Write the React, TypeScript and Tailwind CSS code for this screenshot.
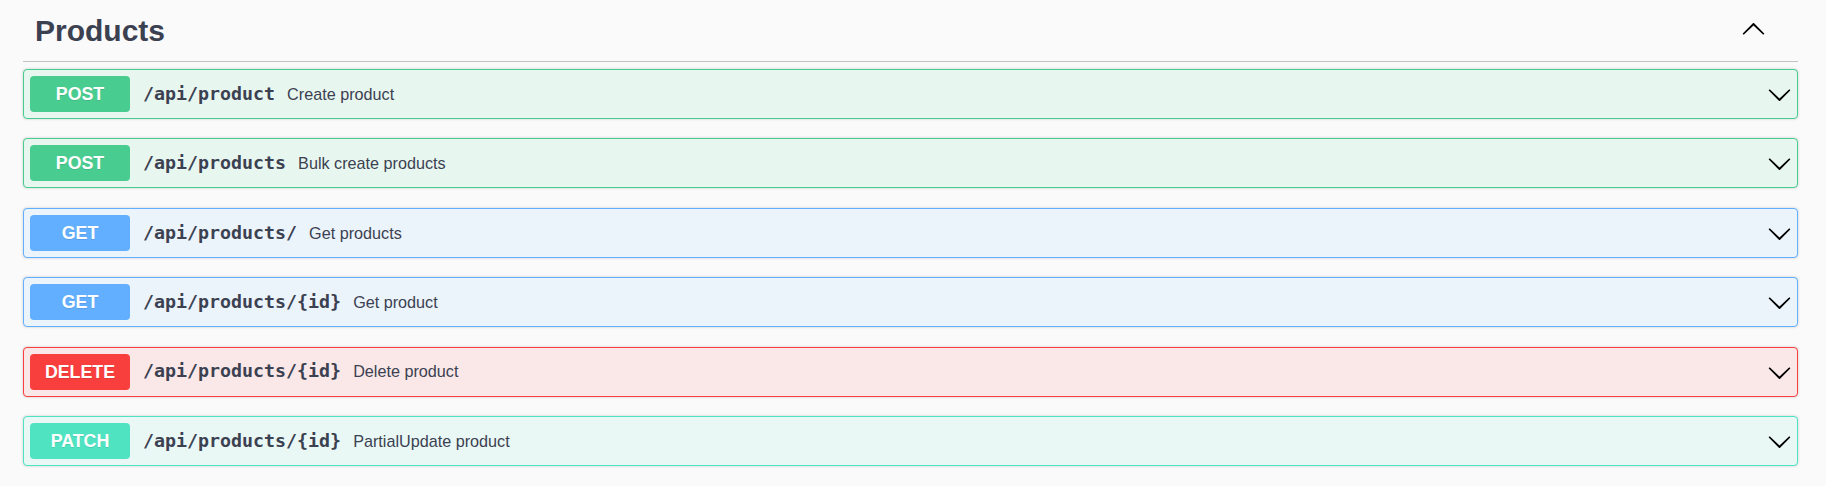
import React from "react";

type Op = {
  method: string;
  path: string;
  desc: string;
  badge: string;
  row: string;
};

const ops: Op[] = [
  { method: "POST", path: "/api/product", desc: "Create product", badge: "bg-[#49cc90]", row: "bg-[#e8f6f0] border-[#49cc90]" },
  { method: "POST", path: "/api/products", desc: "Bulk create products", badge: "bg-[#49cc90]", row: "bg-[#e8f6f0] border-[#49cc90]" },
  { method: "GET", path: "/api/products/", desc: "Get products", badge: "bg-[#61affe]", row: "bg-[#ebf3fb] border-[#61affe]" },
  { method: "GET", path: "/api/products/{id}", desc: "Get product", badge: "bg-[#61affe]", row: "bg-[#ebf3fb] border-[#61affe]" },
  { method: "DELETE", path: "/api/products/{id}", desc: "Delete product", badge: "bg-[#f93e3e]", row: "bg-[#fae7e7] border-[#f93e3e]" },
  { method: "PATCH", path: "/api/products/{id}", desc: "PartialUpdate product", badge: "bg-[#50e3c2]", row: "bg-[#e9f8f5] border-[#50e3c2]" },
];

const ARROW =
  "M17.418 6.109c.272-.268.709-.268.979 0s.271.701 0 .969l-7.908 7.83c-.27.268-.707.268-.979 0l-7.908-7.83c-.27-.268-.27-.701 0-.969.271-.268.709-.268.979 0L10 13.25l7.418-7.141z";

function Chevron({ up = false, className = "" }: { up?: boolean; className?: string }) {
  return (
    <svg
      width="25"
      height="25"
      viewBox="0 0 20 20"
      className={className}
      style={up ? { transform: "rotate(180deg)" } : undefined}
    >
      <path d={ARROW} fill="#000" />
    </svg>
  );
}

export default function App() {
  return (
    <div
      className="w-full h-[486px] bg-[#fafafa] pl-[23px] pr-[28px] text-[#3b4151]"
      style={{ fontFamily: "'Liberation Sans', Arial, sans-serif" }}
    >
      <div className="h-[62px] flex items-center justify-between border-b border-[rgba(59,65,81,0.3)]">
        <h3 className="pl-[12px] text-[30px] leading-none font-bold text-[#3b4151] font-['Liberation_Sans',Arial,sans-serif]">
          Products
        </h3>
        <Chevron up className="mr-[32px] mb-[3px]" />
      </div>
      <div className="mt-[7px] flex flex-col gap-[19.4px]">
        {ops.map((op, i) => (
          <div
            key={i}
            className={`h-[50px] flex items-center border rounded-[4px] pl-[6px] pr-[5px] shadow-[0_0_3px_rgba(0,0,0,0.19)] ${op.row}`}
          >
            <div
              className={`w-[100px] h-[36px] pt-[2px] rounded-[4px] flex items-center justify-center text-white font-bold text-[17.8px] leading-none [text-shadow:0_1px_0_rgba(0,0,0,0.1)] ${op.badge}`}
            >
              {op.method}
            </div>
            <span className="ml-[13px] font-bold text-[18.3px] leading-none text-[#3b4151] font-['DejaVu_Sans_Mono',monospace]">
              {op.path}
            </span>
            <span className="ml-[12px] text-[16.2px] leading-none text-[#3b4151]">{op.desc}</span>
            <div className="flex-1" />
            <Chevron className="mt-[1px]" />
          </div>
        ))}
      </div>
    </div>
  );
}
